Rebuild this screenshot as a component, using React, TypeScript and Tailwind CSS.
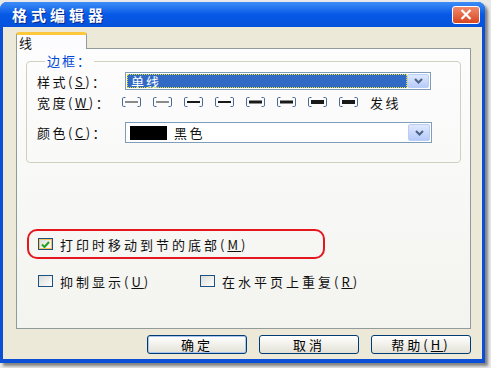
import React from "react";

const cjk = "font-['Noto_Sans_CJK_SC','Noto_Sans_CJK_JP',sans-serif]";

function WidthIcon({ w }: { w: number }) {
  return (
    <svg width="19" height="10" viewBox="0 0 19 10">
      <path d="M3.5 0.5H1.5Q0.5 0.5 0.5 2V8Q0.5 9.5 1.5 9.5H3.5M15.5 0.5H17.5Q18.5 0.5 18.5 2V8Q18.5 9.5 17.5 9.5H15.5" fill="none" stroke="#4a6a9a" strokeWidth="1" />
      <rect x="3" y={5 - w / 2} width="13" height={w} fill="#1a1a1a" />
    </svg>
  );
}

function DropButton() {
  return (
    <div className="flex h-full w-[22px] shrink-0 items-center justify-center rounded-[2px] border border-[#b9cdf6] bg-gradient-to-b from-[#dfe8fd] to-[#b6cbf9]">
      <svg width="9" height="6" viewBox="0 0 9 6">
        <path d="M1 1L4.5 4.5L8 1" fill="none" stroke="#4d6185" strokeWidth="2" />
      </svg>
    </div>
  );
}

function Check({ checked }: { checked?: boolean }) {
  return (
    <span
      className={
        "flex h-[12px] w-[15px] shrink-0 items-center justify-center border border-[#1c5180] bg-gradient-to-br from-[#dcdcd7] to-white " +
        (checked ? "shadow-[inset_0_0_0_1px_#f8c35c]" : "")
      }
    >
      {checked && (
        <svg width="9" height="7" viewBox="0 0 9 7">
          <path d="M1 3.5L3.5 6L8 1" fill="none" stroke="#21a121" strokeWidth="2" />
        </svg>
      )}
    </span>
  );
}

function Button({ label, primary }: { label: React.ReactNode; primary?: boolean }) {
  return (
    <button
      className={
        "flex h-[19px] w-[100px] items-center justify-center rounded-[3px] border border-[#003c74] bg-gradient-to-b from-white to-[#e3e1d6] text-[13px] leading-none tracking-[3px] text-black " +
        (primary ? "shadow-[inset_0_0_0_1px_#aac4f0]" : "")
      }
    >
      {label}
    </button>
  );
}

export default function App() {
  return (
    <div className={`h-[368px] w-[491px] overflow-hidden bg-[#e9e9e9] pt-[2px] text-[#111] ${cjk}`}>
      <div className="flex h-[361px] w-[485px] flex-col overflow-hidden rounded-t-[7px] bg-[#0a4fd6] shadow-[3px_3px_3px_rgba(0,0,0,0.45)]">
        {/* title bar */}
        <div className="flex h-[25px] shrink-0 items-center justify-between bg-gradient-to-b from-[#3d8df7] via-[#0659e6] to-[#0552dc] pl-[12px] pr-[5px]">
          <span className="text-[15px] font-bold leading-none tracking-[4px] text-white [text-shadow:1px_1px_0_#0a2a8a]">
            格式编辑器
          </span>
          <div className="flex h-[18px] w-[28px] items-center justify-center rounded-[3px] border border-white bg-gradient-to-b from-[#f0896a] to-[#d7431e]">
            <svg width="12" height="11" viewBox="0 0 12 11">
              <path d="M1.5 1L10.5 10M10.5 1L1.5 10" stroke="white" strokeWidth="2.2" />
            </svg>
          </div>
        </div>

        {/* body */}
        <div className="flex flex-1 flex-col px-[3px] pb-[4px]">
          <div className="flex flex-1 flex-col bg-[#ece9d8] pl-[13px] pr-[11px] pt-[5px] pb-[5px]">
            {/* tab */}
            <div className="relative z-10 -mb-px flex h-[17px] w-[71px] items-start rounded-t-[3px] border-x border-t-[3px] border-x-[#919b9c] border-t-[#ffc83c] bg-[#fcfcfe] pl-[2px] pt-[1px] text-[13px] leading-none">
              线
            </div>

            {/* panel */}
            <div className="flex h-[281px] flex-col border border-[#919b9c] bg-gradient-to-b from-[#fdfdfe] to-[#f3f3ef] px-[9px] pt-[4px]">
              <fieldset className="rounded-[4px] border border-[#d0d0bf] pb-[19px] pl-[10px] pt-[3px]">
                <legend className="ml-[8px] px-[2px] text-[13px] leading-[16px] tracking-[2px] text-[#0046d5]">
                  边框：
                </legend>

                <div className="flex h-[18px] items-center">
                  <span className="w-[88px] shrink-0 text-[13px] leading-none tracking-[2.5px]">
                    样式(<u>S</u>)：
                  </span>
                  <div className="flex h-[18px] w-[306px] items-stretch border border-[#7f9db9] bg-white p-[1px]">
                    <div className="flex flex-1 items-center bg-[#316ac5] pl-[4px] text-[13px] leading-none tracking-[2px] text-white outline-1 outline-dotted outline-[#e8e020] -outline-offset-1">
                      单线
                    </div>
                    <DropButton />
                  </div>
                </div>

                <div className="mt-[4px] flex h-[16px] items-center">
                  <span className="w-[85px] shrink-0 text-[13px] leading-none tracking-[2.5px]">
                    宽度(<u>W</u>)：
                  </span>
                  <div className="flex items-center gap-[12px] text-[13px] leading-none tracking-[2.5px]">
                    {[1, 1, 2, 2, 3, 3, 4, 4].map((w, i) => (
                      <WidthIcon key={i} w={w} />
                    ))}
                    <span>发线</span>
                  </div>
                </div>

                <div className="mt-[12px] flex h-[21px] items-center">
                  <span className="w-[88px] shrink-0 text-[13px] leading-none tracking-[2.5px]">
                    颜色(<u>C</u>)：
                  </span>
                  <div className="flex h-[21px] w-[307px] items-stretch border border-[#7f9db9] bg-white p-[1px]">
                    <div className="flex flex-1 items-center gap-[7px] pl-[3px]">
                      <div className="h-[14px] w-[37px] bg-black" />
                      <span className="text-[13px] leading-none tracking-[2.5px]">黑色</span>
                    </div>
                    <DropButton />
                  </div>
                </div>
              </fieldset>

              <div className="ml-px mt-[66px] flex h-[30px] w-[298px] items-center gap-[7px] rounded-[10px] border-2 border-[#e4161e] pl-[9px]">
                <Check checked />
                <span className="text-[13px] leading-none tracking-[3px]">
                  打印时移动到节的底部(<u>M</u>)
                </span>
              </div>

              <div className="mt-[14px] flex h-[16px] items-center pl-[12px] text-[13px] leading-none tracking-[3px]">
                <div className="flex w-[162px] items-center gap-[7px]">
                  <Check />
                  <span>抑制显示(<u>U</u>)</span>
                </div>
                <div className="flex items-center gap-[7px]">
                  <Check />
                  <span>在水平页上重复(<u>R</u>)</span>
                </div>
              </div>
            </div>

            {/* buttons */}
            <div className="mt-[6px] flex justify-end gap-[12px]">
              <Button label="确定" primary />
              <Button label="取消" />
              <Button label={<>帮助(<u>H</u>)</>} />
            </div>
          </div>
        </div>
      </div>
    </div>
  );
}
